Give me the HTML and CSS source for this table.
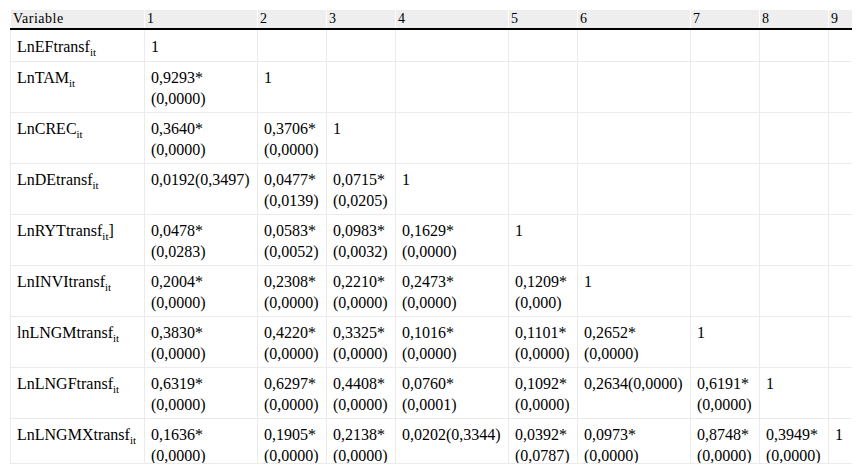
FILE: index.html
```html
<!DOCTYPE html>
<html>
<head>
<meta charset="utf-8">
<link rel="stylesheet" href="styles.css">
</head>
<body>
<div class="frame">
<table class="corr">
  <colgroup>
    <col class="c-var"><col class="c-wide"><col class="c-nar"><col class="c-nar"><col class="c-wide"><col class="c-nar"><col class="c-wide"><col class="c-nar"><col class="c-nar"><col class="c-last">
  </colgroup>
  <thead>
    <tr><th>Variable</th><th>1</th><th>2</th><th>3</th><th>4</th><th>5</th><th>6</th><th>7</th><th>8</th><th>9</th></tr>
  </thead>
  <tbody>
    <tr class="first"><td>LnEFtransf<sub>it</sub></td><td>1</td><td></td><td></td><td></td><td></td><td></td><td></td><td></td><td></td></tr>
    <tr><td>LnTAM<sub>it</sub></td><td>0,9293*<br>(0,0000)</td><td>1</td><td></td><td></td><td></td><td></td><td></td><td></td><td></td></tr>
    <tr><td>LnCREC<sub>it</sub></td><td>0,3640*<br>(0,0000)</td><td>0,3706*<br>(0,0000)</td><td>1</td><td></td><td></td><td></td><td></td><td></td><td></td></tr>
    <tr><td>LnDEtransf<sub>it</sub></td><td>0,0192(0,3497)</td><td>0,0477*<br>(0,0139)</td><td>0,0715*<br>(0,0205)</td><td>1</td><td></td><td></td><td></td><td></td><td></td></tr>
    <tr><td>LnRYTtransf<sub>it</sub>]</td><td>0,0478*<br>(0,0283)</td><td>0,0583*<br>(0,0052)</td><td>0,0983*<br>(0,0032)</td><td>0,1629*<br>(0,0000)</td><td>1</td><td></td><td></td><td></td><td></td></tr>
    <tr><td>LnINVItransf<sub>it</sub></td><td>0,2004*<br>(0,0000)</td><td>0,2308*<br>(0,0000)</td><td>0,2210*<br>(0,0000)</td><td>0,2473*<br>(0,0000)</td><td>0,1209*<br>(0,000)</td><td>1</td><td></td><td></td><td></td></tr>
    <tr><td>lnLNGMtransf<sub>it</sub></td><td>0,3830*<br>(0,0000)</td><td>0,4220*<br>(0,0000)</td><td>0,3325*<br>(0,0000)</td><td>0,1016*<br>(0,0000)</td><td>0,1101*<br>(0,0000)</td><td>0,2652*<br>(0,0000)</td><td>1</td><td></td><td></td></tr>
    <tr><td>LnLNGFtransf<sub>it</sub></td><td>0,6319*<br>(0,0000)</td><td>0,6297*<br>(0,0000)</td><td>0,4408*<br>(0,0000)</td><td>0,0760*<br>(0,0001)</td><td>0,1092*<br>(0,0000)</td><td>0,2634(0,0000)</td><td>0,6191*<br>(0,0000)</td><td>1</td><td></td></tr>
    <tr><td>LnLNGMXtransf<sub>it</sub></td><td>0,1636*<br>(0,0000)</td><td>0,1905*<br>(0,0000)</td><td>0,2138*<br>(0,0000)</td><td>0,0202(0,3344)</td><td>0,0392*<br>(0,0787)</td><td>0,0973*<br>(0,0000)</td><td>0,8748*<br>(0,0000)</td><td>0,3949*<br>(0,0000)</td><td>1</td></tr>
  </tbody>
</table>
</div>
</body>
</html>
```

FILE: styles.css
```css
html, body {
  margin: 0;
  padding: 0;
  background: #ffffff;
}
body {
  padding: 10px;
}
.frame {
  width: 842px;
  height: 453px;
  overflow: hidden;
  border-bottom: 1px solid #ebebeb;
}
.corr {
  width: 842px;
  table-layout: fixed;
  border-collapse: collapse;
  border-spacing: 0;
  color: #000;
}
.c-var { width: 134px; }
.c-wide { width: 113px; }
.c-nar { width: 69px; }
.c-last { width: 24px; }
.corr th {
  background: #eeeeee;
  font-family: "Liberation Serif", serif;
  font-size: 14px;
  letter-spacing: 0.5px;
  font-weight: normal;
  text-align: left;
  line-height: 16px;
  padding: 1px 2px 1px 2px;
  border-bottom: 2px solid #000;
  border-left: 1px solid #fff;
  border-right: 1px solid #fff;
  vertical-align: top;
}
.corr td {
  font-family: "Liberation Serif", serif;
  font-size: 16px;
  line-height: 21px;
  padding: 5px 6px 3px 6px;
  border: 1px solid #ebebeb;
  vertical-align: top;
  white-space: nowrap;
}
.corr tr.first td {
  padding-top: 6px;
  padding-bottom: 4px;
}
.corr sub {
  font-size: 11px;
  line-height: 0;
  vertical-align: -4px;
}
```
